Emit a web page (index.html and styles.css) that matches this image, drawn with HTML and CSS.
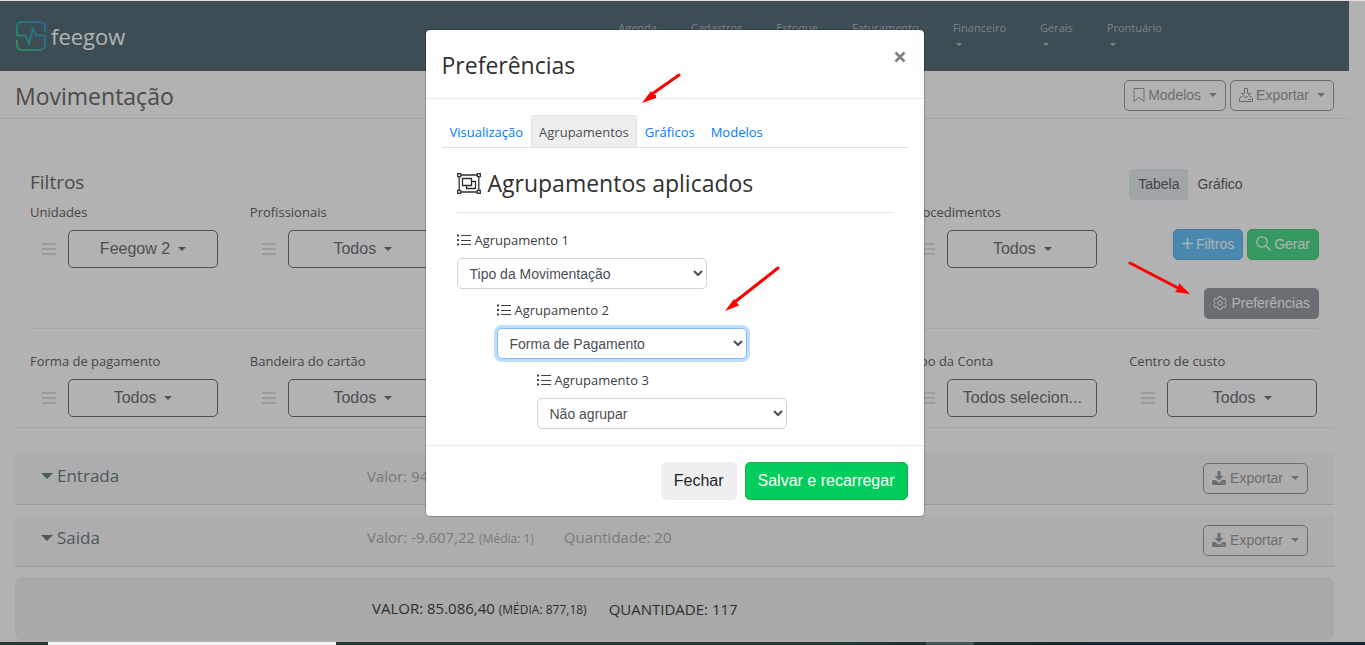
FILE: index.html
```html
<!DOCTYPE html>
<html lang="pt-br">
<head>
  <meta charset="UTF-8">
  <meta name="viewport" content="width=device-width, initial-scale=1.0">
  <title>Movimentação - Feegow</title>
  <link rel="stylesheet" href="styles.css">
</head>
<body>

<!-- shared icons -->
<svg class="sprite" aria-hidden="true">
  <symbol id="i-bars" viewBox="0 0 14 12"><path d="M0 1h14M0 6h14M0 11h14" stroke="currentColor" stroke-width="2"/></symbol>
  <symbol id="i-list" viewBox="0 0 14 12"><path d="M0 1.5h2M0 6h2M0 10.5h2" stroke="currentColor" stroke-width="2"/><path d="M4 1.5h10M4 6.5h10M4 10.5h10" stroke="currentColor"/></symbol>
  <symbol id="i-download" viewBox="0 0 14 14"><path d="M5.500 0h3v5h3L7 9.500 2.500 5h3z" fill="currentColor"/><path d="M1 9h2.500L7 12l3.500-3H13l1 1v3l-1 1H1l-1-1v-3z" fill="currentColor"/><path d="M9.500 12.200h1M11.500 12.200h1" stroke="#f8f8f8"/></symbol>
</svg>

<div class="screen">
  <div class="topline"></div>
  <div class="page">
    <header class="navbar">
      <a class="logo" href="#">
        <svg width="30" height="30" viewBox="0 0 30 30" fill="none">
          <defs>
            <linearGradient id="logoGrad" x1="0" y1="1" x2="1" y2="0">
              <stop offset="0" stop-color="#4cc878"/>
              <stop offset=".5" stop-color="#3caab4"/>
              <stop offset="1" stop-color="#3c96dc"/>
            </linearGradient>
          </defs>
          <path d="M29 11V6a5 5 0 0 0-5-5H6a5 5 0 0 0-5 5v8.500h8.500l3.500 8L17 7.500l3.500 7H29V24a5 5 0 0 1-5 5H6a5 5 0 0 1-5-5v-5" stroke="url(#logoGrad)" stroke-width="2"/>
        </svg>
        <span>feegow</span>
      </a>
      <nav class="menu">
        <a href="#">Agenda</a>
        <a href="#">Cadastros</a>
        <a href="#">Estoque</a>
        <a href="#">Faturamento</a>
        <a href="#">Financeiro</a>
        <a href="#">Gerais</a>
        <a href="#">Prontuário</a>
      </nav>
    </header>

    <div class="title-bar">
      <h1>Movimentação</h1>
      <div class="btn-row">
        <button class="btn btn-sm btn-outline caret"><svg width="12" height="14" viewBox="0 0 12 14"><path d="M1 .5h10v13l-5-4-5 4z" fill="none" stroke="currentColor"/></svg>Modelos</button>
        <button class="btn btn-sm btn-outline caret"><svg width="14" height="14" viewBox="0 0 14 14" fill="none" stroke="currentColor"><path d="M5.500.5h3v5h3L7 10 2.500 5.500h3z"/><path d="M3.500 8.500H2l-1.500 2v3h13v-3l-1.500-2h-1.500M9 11.500h3"/></svg>Exportar</button>
      </div>
    </div>

    <main class="content">
      <section class="filters">
        <div class="filter-head">
          <h2>Filtros</h2>
          <div class="toggle">
            <button class="active">Tabela</button><button>Gráfico</button>
          </div>
        </div>

        <div class="filter-grid first">
          <div class="filter">
            <label for="unidades">Unidades</label>
            <div class="field"><svg class="bars"><use href="#i-bars"/></svg><button id="unidades" class="btn btn-drop caret">Feegow 2</button></div>
          </div>
          <div class="filter">
            <label for="profissionais">Profissionais</label>
            <div class="field"><svg class="bars"><use href="#i-bars"/></svg><button id="profissionais" class="btn btn-drop caret">Todos</button></div>
          </div>
          <div class="filter col-5">
            <label for="procedimentos">Procedimentos</label>
            <div class="field"><svg class="bars"><use href="#i-bars"/></svg><button id="procedimentos" class="btn btn-drop caret">Todos</button></div>
          </div>
          <div class="actions">
            <button class="btn btn-sm btn-info"><svg width="11" height="11" viewBox="0 0 11 11"><path d="M5.500 0v11M0 5.500h11" stroke="currentColor" stroke-width="1.500"/></svg>Filtros</button>
            <button class="btn btn-sm btn-success"><svg width="15" height="15" viewBox="0 0 15 15" fill="none" stroke="currentColor" stroke-width="1.300"><circle cx="6" cy="6" r="5.200"/><path d="M9.800 9.800l4.700 4.700"/></svg>Gerar</button>
            <button class="btn btn-sm btn-secondary"><svg class="wide" width="14" height="14" viewBox="0 0 14 14" fill="none" stroke="currentColor"><path d="M5.500.6h3l.4 1.900 1.200.7 1.900-.6 1.400 2.500-1.400 1.300v1.300l1.400 1.300-1.400 2.500-1.900-.6-1.200.7-.4 1.800h-3l-.4-1.800-1.200-.7-1.900.6L.6 9l1.400-1.300V6.400L.6 5.100 2 2.600l1.900.6 1.200-.7z"/><circle cx="7" cy="7" r="2.200"/></svg>Preferências</button>
          </div>
        </div>

        <div class="filter-grid second">
          <div class="filter">
            <label for="forma">Forma de pagamento</label>
            <div class="field"><svg class="bars"><use href="#i-bars"/></svg><button id="forma" class="btn btn-drop caret">Todos</button></div>
          </div>
          <div class="filter">
            <label for="bandeira">Bandeira do cartão</label>
            <div class="field"><svg class="bars"><use href="#i-bars"/></svg><button id="bandeira" class="btn btn-drop caret">Todos</button></div>
          </div>
          <div class="filter col-5">
            <label for="conta">Tipo da Conta</label>
            <div class="field"><svg class="bars"><use href="#i-bars"/></svg><button id="conta" class="btn btn-drop">Todos selecion...</button></div>
          </div>
          <div class="filter">
            <label for="custo">Centro de custo</label>
            <div class="field"><svg class="bars"><use href="#i-bars"/></svg><button id="custo" class="btn btn-drop caret">Todos</button></div>
          </div>
        </div>
      </section>

      <div class="group">
        <span class="group-name">Entrada</span>
        <span class="group-values"><span>Valor: 94.693,62</span></span>
        <button class="btn btn-sm btn-outline caret"><svg class="wide" width="14" height="14"><use href="#i-download"/></svg>Exportar</button>
      </div>
      <div class="group">
        <span class="group-name">Saida</span>
        <span class="group-values"><span>Valor: -9.607,22 <small>(Média: 1)</small></span><span>Quantidade: 20</span></span>
        <button class="btn btn-sm btn-outline caret"><svg class="wide" width="14" height="14"><use href="#i-download"/></svg>Exportar</button>
      </div>
      <div class="total">
        <span>VALOR: 85.086,40 <small>(MÉDIA: 877,18)</small></span><span>QUANTIDADE: 117</span>
      </div>
    </main>

    <div class="backdrop">
      <div class="modal" role="dialog" aria-labelledby="modalTitle">
        <div class="modal-header">
          <h3 id="modalTitle">Preferências</h3>
          <button class="close" aria-label="Fechar"><svg width="12" height="12" viewBox="0 0 12 12"><path d="M1.500 1.500l9 9M10.500 1.500l-9 9" stroke="currentColor" stroke-width="2.600"/></svg></button>
        </div>
        <div class="modal-body">
          <nav class="tabs">
            <a href="#">Visualização</a>
            <a href="#" class="active">Agrupamentos</a>
            <a href="#">Gráficos</a>
            <a href="#">Modelos</a>
          </nav>
          <div class="tab-pane">
            <h3 class="pane-title">
              <svg width="24" height="21" viewBox="0 0 24 21" fill="none" stroke="currentColor" stroke-width="1.300"><path d="M4 2h16M4 19h16M2.200 4v13M21.800 4v13"/><path d="M.7.700h3v3h-3zM20.300.700h3v3h-3zM.7 17.300h3v3h-3zM20.300 17.300h3v3h-3z"/><path d="M5.500 5.500h9v7h-9zM14.500 8.500h4v7h-9v-3"/></svg>
              Agrupamentos aplicados
            </h3>
            <div class="agrup">
              <label for="agrup1"><svg class="list"><use href="#i-list"/></svg>Agrupamento 1</label>
              <select id="agrup1"><option>Tipo da Movimentação</option></select>
            </div>
            <div class="agrup level-2">
              <label for="agrup2"><svg class="list"><use href="#i-list"/></svg>Agrupamento 2</label>
              <select id="agrup2" class="focused"><option>Forma de Pagamento</option></select>
            </div>
            <div class="agrup level-3">
              <label for="agrup3"><svg class="list"><use href="#i-list"/></svg>Agrupamento 3</label>
              <select id="agrup3"><option>Não agrupar</option></select>
            </div>
          </div>
        </div>
        <div class="modal-footer">
          <button class="btn btn-light">Fechar</button>
          <button class="btn btn-save">Salvar e recarregar</button>
        </div>
        <svg class="arrow arrow-tab" width="40" height="32" viewBox="0 0 40 32"><path d="M38 3L11 22" stroke="#f00" stroke-width="3" stroke-linecap="round"/><path d="M1 31l9-12 1 3 4 1v3z" fill="#f00"/></svg>
        <svg class="arrow arrow-select" width="56" height="46" viewBox="0 0 56 46"><path d="M53 2L11 35" stroke="#f00" stroke-width="3" stroke-linecap="round"/><path d="M0 45l9-12 2 2.500 3 4z" fill="#f00"/></svg>
      </div>
    </div>
    <svg class="arrow arrow-pref" width="64" height="36" viewBox="0 0 64 36"><path d="M2 3l48 25" stroke="#f00" stroke-width="3" stroke-linecap="round"/><path d="M62 34l-15-2 3-4 1-5z" fill="#f00"/></svg>
  </div>
  <div class="taskbar"><span class="task-search"></span><span class="task-open"></span></div>
</div>

</body>
</html>
```
FILE: styles.css
```css
* {
  box-sizing: border-box;
}
body {
  margin: 0;
  font-family: "Open Sans", sans-serif;
  font-size: 13px;
  line-height: 20px;
  color: #666;
  background: #fff;
}
h1, h2, h3 {
  margin: 0;
  font-weight: 500;
}
a {
  text-decoration: none;
}
.sprite {
  position: absolute;
  width: 0;
  height: 0;
}
.screen {
  display: flex;
  flex-direction: column;
  height: 100vh;
  overflow: hidden;
}
.topline {
  height: 1px;
  flex: none;
  background: #ecdcdc;
}
.page {
  position: relative;
  flex: 1;
  min-height: 0;
  padding-right: 16px;
  overflow: hidden;
}

/* navbar */
.navbar {
  display: flex;
  justify-content: space-between;
  height: 70px;
  padding: 17px 187px 0 16px;
  background: #566f79;
}
.logo {
  display: flex;
  gap: 5px;
  height: 36px;
  align-items: center;
  font-size: 22px;
  color: #fff;
}
.menu {
  display: flex;
  gap: 34px;
  font-size: 11px;
}
.menu a {
  color: #b4bdc1;
}
.menu a::after {
  content: "";
  display: block;
  width: 0;
  margin: 5px 0 0 3px;
  border: 3px solid transparent;
  border-top-color: currentColor;
  border-bottom: 0;
}

/* page title */
.title-bar {
  display: flex;
  justify-content: space-between;
  align-items: center;
  height: 48px;
  padding: 2px 15px 0;
  border-bottom: 1px solid #ebebeb;
}
.title-bar h1 {
  font-size: 23px;
  line-height: 32px;
  color: #6c6c6c;
}
.btn-row {
  display: flex;
  gap: 4px;
}

/* buttons */
.btn {
  display: inline-flex;
  align-items: center;
  justify-content: center;
  height: 38px;
  padding: 0 12px;
  border: 1px solid transparent;
  border-radius: 5px;
  background: none;
  font-family: "Liberation Sans", Arial, sans-serif;
  font-size: 16px;
  white-space: nowrap;
  cursor: pointer;
}
.btn-sm {
  height: 31px;
  padding: 0 8px 2px;
  font-size: 14px;
}
.btn svg {
  flex: none;
  margin-right: 3px;
}
.btn svg.wide {
  margin-right: 4px;
}
.caret::after {
  content: "";
  margin-left: 8px;
  border: 4px solid transparent;
  border-top-color: currentColor;
  border-bottom: 0;
}
.btn-outline {
  color: #9a9ea3;
  border-color: #9a9ea3;
}
.btn-info {
  color: #fff;
  background: #69c5fb;
  border-color: #5cb4ea;
}
.btn-success {
  color: #fff;
  background: #4edc8b;
  border-color: #4fca80;
}
.btn-secondary {
  color: #fff;
  background: #999ea5;
}
.btn-drop {
  width: 150px;
  color: #707376;
  border-color: #707376;
}
.btn-light {
  color: #212529;
  background: #efefef;
}
.btn-save {
  color: #fff;
  background: #00cd5b;
  border-color: #28a745;
}

/* filters */
.content {
  padding: 0 15px;
}
.filters {
  padding-top: 50px;
  border-bottom: 1px solid #f0f0f0;
}
.filter-head,
.filter-grid {
  display: grid;
  grid-template-columns: repeat(6, 1fr);
}
.filter-head > *,
.filter-grid > * {
  padding-left: 15px;
}
.filter-head h2 {
  font-size: 19px;
  line-height: 26px;
  color: #6c6c6c;
}
.toggle {
  grid-column: 6;
  display: flex;
  height: 31px;
}
.toggle button {
  padding: 0 9px 2px;
  border: 0;
  border-radius: 0 5px 5px 0;
  background: none;
  font: 14px "Liberation Sans", Arial, sans-serif;
  color: #5f6468;
}
.toggle .active {
  border-radius: 5px 0 0 5px;
  background: #e6ecf0;
}
.col-5 {
  grid-column: 5;
}
.filter-grid label {
  display: block;
  height: 30px;
  line-height: 24px;
}
.filter-grid.first {
  height: 129px;
}
.filter-grid.first::after {
  content: "";
  grid-column: 1 / -1;
  align-self: end;
  height: 1px;
  margin: 0 15px;
  background: #f0f0f0;
}
.filter-grid.second {
  height: 98px;
  padding-top: 20px;
}
.field {
  display: flex;
  align-items: center;
  gap: 12px;
  padding-left: 12px;
}
.bars {
  width: 14px;
  height: 12px;
  color: #dedede;
}
.actions {
  display: flex;
  flex-wrap: wrap;
  justify-content: flex-end;
  align-content: flex-start;
  gap: 28px 4px;
  padding: 29px 15px 0 0;
}

/* groups */
.group {
  display: flex;
  align-items: center;
  height: 52px;
  margin-bottom: 10px;
  padding: 0 26px;
  background: #f8f8f8;
  border-bottom: 1px solid #dfdfdf;
}
.filters + .group {
  margin-top: 25px;
}
.group-name {
  width: 326px;
  padding-bottom: 6px;
  font-size: 17px;
  color: #6c8086;
}
.group-name::before {
  content: "";
  display: inline-block;
  margin-right: 4px;
  vertical-align: 3px;
  border: 6px solid transparent;
  border-top-color: currentColor;
  border-bottom: 0;
}
.group-values {
  display: flex;
  gap: 30px;
  flex: 1;
  padding-bottom: 6px;
  font-size: 15px;
  color: #b0b0b0;
}
small {
  font-size: 12px;
}
.total {
  display: flex;
  align-items: center;
  gap: 22px;
  height: 64px;
  padding-left: 357px;
  border-radius: 8px;
  background: #f2f2f2;
  font-size: 15px;
  color: #444;
}

/* modal */
.backdrop {
  position: absolute;
  inset: 0;
  display: flex;
  align-items: flex-start;
  justify-content: center;
  padding: 28px 16px 0 0;
  background: rgba(0, 0, 0, 0.3);
}
.modal {
  position: relative;
  width: 500px;
  background: #fff;
  background-clip: padding-box;
  border: 1px solid rgba(0, 0, 0, 0.2);
  border-radius: 5px;
  color: #3c4043;
}
.modal-header {
  display: flex;
  justify-content: space-between;
  align-items: flex-start;
  height: 69px;
  padding: 19px 16px 0;
  border-bottom: 1px solid #e9ecef;
}
.modal-header h3 {
  font-size: 23px;
  line-height: 32px;
  color: #303030;
}
.close {
  display: flex;
  padding: 2px;
  border: 0;
  background: none;
  color: #7f7f7f;
}
.modal-body {
  padding: 16px 16px 0;
}
.tabs {
  display: flex;
  border-bottom: 1px solid #dee2e6;
}
.tabs a {
  height: 32px;
  padding: 0 7px;
  border: 1px solid transparent;
  border-bottom: 0;
  border-radius: 4px 4px 0 0;
  line-height: 32px;
  color: #007bff;
}
.tabs .active {
  color: #495057;
  background: #eee;
  border-color: #dee2e6;
}
.tab-pane {
  padding: 16px 15px;
}
.pane-title {
  display: flex;
  align-items: center;
  gap: 7px;
  height: 49px;
  margin-bottom: 15px;
  padding-bottom: 10px;
  border-bottom: 1px solid #e5e5e5;
  font-size: 23px;
  color: #303030;
}
.agrup label {
  display: flex;
  align-items: center;
  gap: 4px;
  height: 24px;
}
.list {
  width: 14px;
  height: 12px;
}
.agrup select {
  display: block;
  width: 250px;
  height: 31px;
  margin: 6px 0 9px;
  padding: 4px 8px;
  border: 1px solid #ced4da;
  border-radius: 5px;
  background: #fff;
  font: 14px "Liberation Sans", Arial, sans-serif;
  color: #495057;
}
.agrup .focused {
  border-color: #80bdff;
  box-shadow: 0 0 0 3px #bfdeff;
}
.level-2 {
  margin-left: 40px;
}
.level-3 {
  margin-left: 80px;
}
.level-3 select {
  margin-bottom: 0;
}
.modal-footer {
  display: flex;
  justify-content: flex-end;
  gap: 8px;
  padding: 16px;
  border-top: 1px solid #e9ecef;
}

/* red pointers over the screen */
.arrow {
  position: absolute;
  pointer-events: none;
}
.arrow-tab {
  top: 42px;
  left: 215px;
}
.arrow-select {
  top: 236px;
  left: 299px;
}
.arrow-pref {
  top: 259px;
  right: 173px;
}

.taskbar {
  display: flex;
  flex: none;
  height: 3px;
  padding-left: 48px;
  background: linear-gradient(90deg, #22393a 60%, #16252f 80%);
}
.task-search {
  width: 288px;
  background: #f5f5f5;
}
.task-open {
  width: 48px;
  margin-left: 590px;
  background: #44555a;
}
```
